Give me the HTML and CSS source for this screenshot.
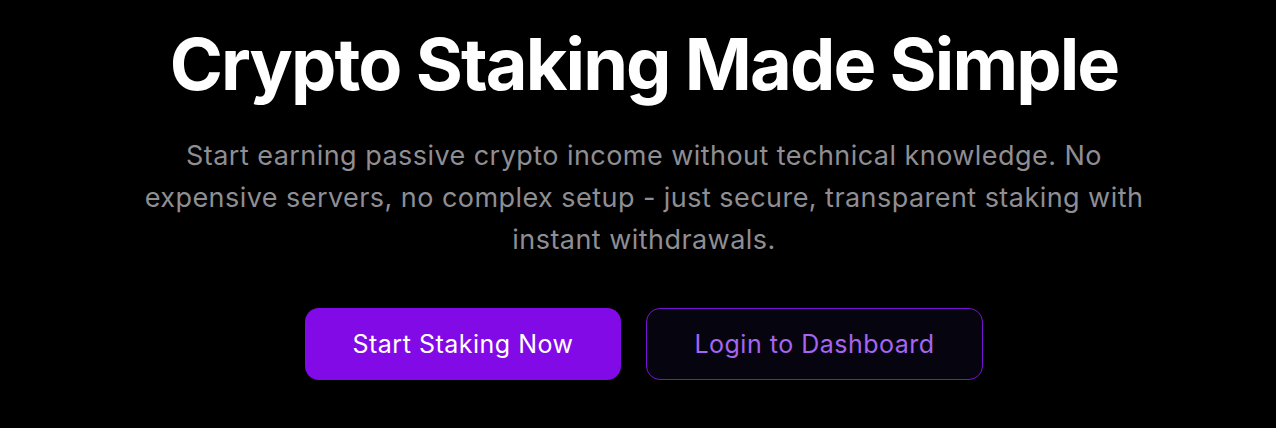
FILE: index.html
```html
<!DOCTYPE html>
<html lang="en">
<head>
<meta charset="utf-8">
<title>Crypto Staking</title>
<link rel="stylesheet" href="styles.css">
</head>
<body>
<section class="hero">
  <h1 class="hero-title">Crypto Staking Made Simple</h1>
  <p class="hero-text">Start earning passive crypto income without technical knowledge. No expensive servers, no complex setup - just secure, transparent staking with instant withdrawals.</p>
  <div class="hero-actions">
    <a class="btn btn-primary" href="#">Start Staking Now</a>
    <a class="btn btn-outline" href="#">Login to Dashboard</a>
  </div>
</section>
</body>
</html>
```
FILE: styles.css
```css
html, body {
  margin: 0;
  padding: 0;
  background: #000;
}
body {
  font-family: Inter, "Noto Sans", sans-serif;
  color: #fff;
  height: 428px;
  overflow: hidden;
}
.hero {
  display: flex;
  flex-direction: column;
  align-items: center;
  padding: 20px 0 0 12px;
  text-align: center;
}
.hero-title {
  margin: 0;
  font-size: 72px;
  font-weight: 700;
  line-height: 88px;
  letter-spacing: -1.9px;
}
.hero-text {
  margin: 27px 0 0;
  max-width: 1000px;
  font-size: 27px;
  line-height: 42px;
  letter-spacing: 0.45px;
  color: #8e8e93;
}
.hero-actions {
  display: flex;
  gap: 25px;
  margin-top: 47px;
}
.btn {
  display: flex;
  align-items: center;
  justify-content: center;
  box-sizing: border-box;
  height: 72px;
  padding: 0;
  border-radius: 14px;
  font-size: 25px;
  letter-spacing: 0.5px;
  white-space: nowrap;
  text-decoration: none;
}
.btn-primary {
  width: 316px;
  background: #820ae6;
  color: #fff;
}
.btn-outline {
  width: 337px;
  background: #06040f;
  border: 1px solid #7a12d6;
  color: #a564f2;
}
```
